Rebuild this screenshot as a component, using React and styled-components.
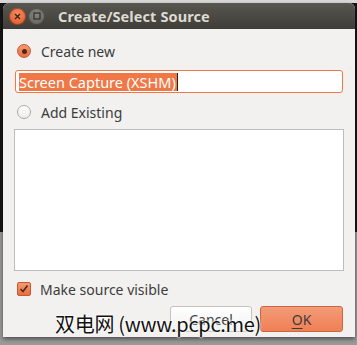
import React from "react";
import styled, { createGlobalStyle } from "styled-components";

const GlobalStyle = createGlobalStyle`
  body {
    margin: 0;
    font-family: "Noto Sans", "Open Sans", sans-serif;
  }
`;

const Page = styled.div`
  position: relative;
  width: 357px;
  height: 345px;
  overflow: hidden;
  background: linear-gradient(to bottom, #d9d9d9 0, #d9d9d9 3px, #161616 3px, #161616 232px, #9a9a9a 232px);
  padding: 3px 2px 0 3px;
  box-sizing: border-box;
`;

const Window = styled.div`
  display: flex;
  flex-direction: column;
  width: 352px;
  height: 334px;
  border-radius: 6px 6px 0 0;
  overflow: hidden;
  box-shadow: 0 2px 4px rgba(0, 0, 0, 0.5);
  background: #f2f1f0;
`;

const TitleBar = styled.div`
  display: flex;
  align-items: center;
  gap: 2px;
  height: 26px;
  padding-left: 6px;
  background: linear-gradient(to bottom, #57564f, #3e3d38);
  flex-shrink: 0;
`;

const WinButton = styled.div`
  width: 17px;
  height: 17px;
  border-radius: 50%;
  display: flex;
  align-items: center;
  justify-content: center;
  background: ${(p) =>
    p.$close
      ? "radial-gradient(circle at 50% 35%, #f28c62, #e0521f)"
      : "radial-gradient(circle at 50% 35%, #86857f, #5e5d58)"};
  box-shadow: inset 0 0 0 1px rgba(0, 0, 0, 0.3);
`;

const Title = styled.div`
  margin-left: 11px;
  font-size: 14.5px;
  font-weight: 700;
  color: #dfdbd2;
  letter-spacing: 0.1px;
`;

const Body = styled.div`
  display: flex;
  flex-direction: column;
  padding: 12px 11px 5px 11px;
  flex: 1;
`;

const OptionRow = styled.label`
  display: flex;
  align-items: center;
  height: 20px;
  padding-left: 3px;
  font-size: 14px;
  color: #3c3c3c;
  margin-top: ${(p) => p.$gap || 0}px;
`;

const Radio = styled.span`
  width: 14px;
  height: 14px;
  border-radius: 50%;
  box-sizing: border-box;
  margin-right: 10px;
  display: flex;
  align-items: center;
  justify-content: center;
  border: 1px solid ${(p) => (p.$checked ? "#c45a33" : "#a8a8a8")};
  background: ${(p) =>
    p.$checked ? "linear-gradient(#f59a72, #ea6d3d)" : "linear-gradient(#ffffff, #ececec)"};

  &::after {
    content: "";
    display: ${(p) => (p.$checked ? "block" : "none")};
    width: 5px;
    height: 5px;
    border-radius: 50%;
    background: #4a2a1c;
  }
`;

const TextInput = styled.div`
  margin: 9px 1px 0 1px;
  height: 23px;
  box-sizing: border-box;
  border: 1px solid #f07746;
  border-radius: 3px;
  background: #fff;
  display: flex;
  align-items: center;
  padding-left: 3px;
  font-size: 14.5px;
`;

const Selection = styled.span`
  background: #f07746;
  color: #fff;
  line-height: 18px;
  padding-right: 1px;
`;

const Caret = styled.span`
  width: 1px;
  height: 18px;
  background: #222;
`;

const ListBox = styled.div`
  margin-top: 7px;
  height: 142px;
  box-sizing: border-box;
  border: 1px solid #bdbdbd;
  background: #fff;
`;

const Check = styled.span`
  width: 14px;
  height: 14px;
  box-sizing: border-box;
  border-radius: 2px;
  border: 1px solid #c45a33;
  background: linear-gradient(#f59a72, #ea6d3d);
  margin-right: 9px;
  display: flex;
  align-items: center;
  justify-content: center;
`;

const ButtonRow = styled.div`
  display: flex;
  justify-content: flex-end;
  gap: 8px;
  margin-top: 7px;
  padding-right: 1px;
`;

const Button = styled.button`
  width: ${(p) => p.$width}px;
  height: 26px;
  box-sizing: border-box;
  border-radius: 3px;
  font-family: inherit;
  font-size: 14px;
  color: #3c3c3c;
  border: 1px solid ${(p) => (p.$primary ? "#c8673f" : "#c3c2c0")};
  background: ${(p) =>
    p.$primary ? "linear-gradient(#f39b78, #f07f55)" : "linear-gradient(#ffffff, #f1f1f1)"};

  u {
    text-decoration-thickness: 1px;
    text-underline-offset: 3px;
  }
`;

const Watermark = styled.div`
  position: absolute;
  left: 55px;
  top: 309px;
  font-size: 20px;
  color: #111;
  font-family: "Noto Sans CJK SC", "Noto Sans", sans-serif;
  white-space: nowrap;
  text-shadow: 0 0 2px #fff, 0 0 2px #fff, 0 0 3px #fff;
  letter-spacing: -0.3px;
`;

export default () => (
  <>
    <GlobalStyle />
    <Page>
      <Window>
        <TitleBar>
          <WinButton $close>
            <svg width="7" height="7" viewBox="0 0 7 7">
              <path d="M1 1L6 6M6 1L1 6" stroke="#3a2016" strokeWidth="1.3" />
            </svg>
          </WinButton>
          <WinButton>
            <svg width="8" height="8" viewBox="0 0 8 8">
              <rect x="1" y="1" width="6" height="6" fill="none" stroke="#2f2e2b" strokeWidth="1.2" />
            </svg>
          </WinButton>
          <Title>Create/Select Source</Title>
        </TitleBar>
        <Body>
          <OptionRow>
            <Radio $checked />
            Create new
          </OptionRow>
          <TextInput>
            <Selection>Screen Capture (XSHM)</Selection>
            <Caret />
          </TextInput>
          <OptionRow $gap={9}>
            <Radio />
            Add Existing
          </OptionRow>
          <ListBox />
          <OptionRow $gap={8}>
            <Check>
              <svg width="10" height="10" viewBox="0 0 10 10">
                <path d="M1.5 5L4 7.5L8.5 1.5" fill="none" stroke="#4a2a1c" strokeWidth="1.6" />
              </svg>
            </Check>
            Make source visible
          </OptionRow>
          <ButtonRow>
            <Button $width={82}>Cancel</Button>
            <Button $width={83} $primary>
              <u>O</u>K
            </Button>
          </ButtonRow>
        </Body>
      </Window>
      <Watermark>双电网 (www.pcpc.me)</Watermark>
    </Page>
  </>
);
